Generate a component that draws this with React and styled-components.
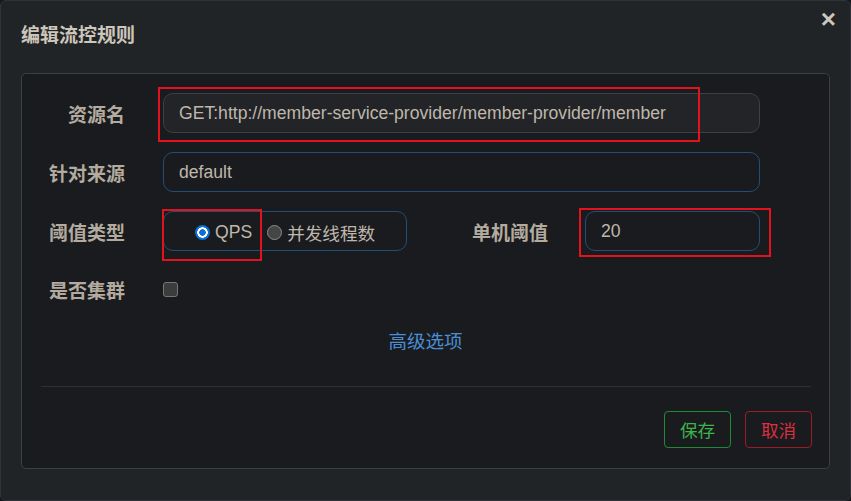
import React from 'react'
import styled, { createGlobalStyle } from 'styled-components'

const GlobalStyle = createGlobalStyle`
    html, body {
        margin: 0;
        padding: 0;
        background: #15171a;
    }
    * {
        box-sizing: border-box;
    }
`

const FONT = `"Liberation Sans", "Noto Sans CJK SC", sans-serif`

const Modal = styled.div`
    position: relative;
    width: 851px;
    height: 501px;
    padding: 0 20px;
    background: #212427;
    border: 1px solid #303337;
    border-radius: 6px;
    font-family: ${FONT};
    overflow: hidden;
`
const Header = styled.div`
    display: flex;
    align-items: center;
    justify-content: space-between;
    height: 64px;
    margin-bottom: 8px;
`
const Title = styled.h4`
    margin: 0;
    font-size: 19px;
    font-weight: bold;
    color: #cdc6bb;
`
const Close = styled.span`
    margin-right: -6px;
    margin-top: -28px;
    font-size: 26px;
    font-weight: bold;
    line-height: 1;
    color: #cdc6bb;
`
const Panel = styled.div`
    height: 396px;
    padding-top: 19px;
    background: #1a1b1e;
    border: 1px solid #3c3f43;
    border-radius: 5px;
`
const Row = styled.div`
    display: flex;
    align-items: center;
    height: 40px;
    margin-bottom: ${props => props.gap ?? 19}px;
    padding-right: 69px;
`
const Label = styled.label`
    flex: none;
    width: ${props => props.width || 103}px;
    margin-right: ${props => props.space || 38}px;
    text-align: right;
    font-size: 19px;
    font-weight: bold;
    color: #b3ab9f;
`
const Input = styled.div`
    display: flex;
    align-items: center;
    height: 40px;
    width: ${props => props.width ? props.width + 'px' : 'auto'};
    flex: ${props => props.width ? 'none' : 1};
    padding: 0 15px;
    font-size: 17.6px;
    color: #bfb7ab;
    background: ${props => props.disabled ? '#222427' : 'transparent'};
    border: 1px solid ${props => props.disabled ? '#3d4044' : '#234e78'};
    border-radius: 10px;
`
const RadioGroup = styled.div`
    display: flex;
    align-items: center;
    width: 245px;
    height: 40px;
    padding-left: 31px;
    padding-top: 3px;
    border: 1px solid #234e78;
    border-radius: 10px;
`
const RadioOption = styled.span`
    display: flex;
    align-items: center;
    gap: 5px;
    margin-right: 15px;
    font-size: 17.6px;
    color: #bfb7ab;
`
const RadioDot = styled.span`
    width: 15px;
    height: 15px;
    border-radius: 50%;
    background: ${props => props.checked
        ? 'radial-gradient(circle, #0b6fd8 0 3px, #ffffff 3.5px 5px, #0b6fd8 5.5px)'
        : '#454545'};
    border: ${props => props.checked ? 'none' : '1px solid #8c8c8c'};
`
const Checkbox = styled.span`
    width: 15px;
    height: 15px;
    background: #3c3c3c;
    border: 1px solid #767676;
    border-radius: 3px;
`
const Advanced = styled.div`
    text-align: center;
    margin-top: 18px;
    font-size: 18.5px;
    color: #4a8fd6;
`
const Divider = styled.hr`
    margin: 33px 18px 0 19px;
    border: none;
    border-top: 1px solid #2d2f33;
`
const Footer = styled.div`
    display: flex;
    justify-content: flex-end;
    gap: 14px;
    margin-top: 24px;
    padding-right: 17px;
`
const Button = styled.button`
    width: 67px;
    height: 37px;
    padding: 0;
    font-family: ${FONT};
    font-size: 17.6px;
    background: transparent;
    color: ${props => props.danger ? '#d8303e' : '#3cb44c'};
    border: 1px solid ${props => props.danger ? '#9b1b27' : '#1f8a34'};
    border-radius: 4px;
`
const Mark = styled.div`
    position: absolute;
    border: 2px solid #e3131d;
`

export default function App() {
    return (
        <>
            <GlobalStyle />
            <Modal>
                <Header>
                    <Title>编辑流控规则</Title>
                    <Close>×</Close>
                </Header>
                <Panel>
                    <Row>
                        <Label>资源名</Label>
                        <Input disabled>GET:http://member-service-provider/member-provider/member</Input>
                    </Row>
                    <Row>
                        <Label>针对来源</Label>
                        <Input>default</Input>
                    </Row>
                    <Row gap={18}>
                        <Label>阈值类型</Label>
                        <RadioGroup>
                            <RadioOption><RadioDot checked />QPS</RadioOption>
                            <RadioOption><RadioDot />并发线程数</RadioOption>
                        </RadioGroup>
                        <Label width={141} space={37}>单机阈值</Label>
                        <Input width={175}>20</Input>
                    </Row>
                    <Row gap={0}>
                        <Label>是否集群</Label>
                        <Checkbox />
                    </Row>
                    <Advanced>高级选项</Advanced>
                    <Divider />
                    <Footer>
                        <Button>保存</Button>
                        <Button danger>取消</Button>
                    </Footer>
                </Panel>
                <Mark style={{ left: 157, top: 86, width: 542, height: 55 }} />
                <Mark style={{ left: 161, top: 208, width: 100, height: 52 }} />
                <Mark style={{ left: 578, top: 207, width: 192, height: 49 }} />
            </Modal>
        </>
    )
}
